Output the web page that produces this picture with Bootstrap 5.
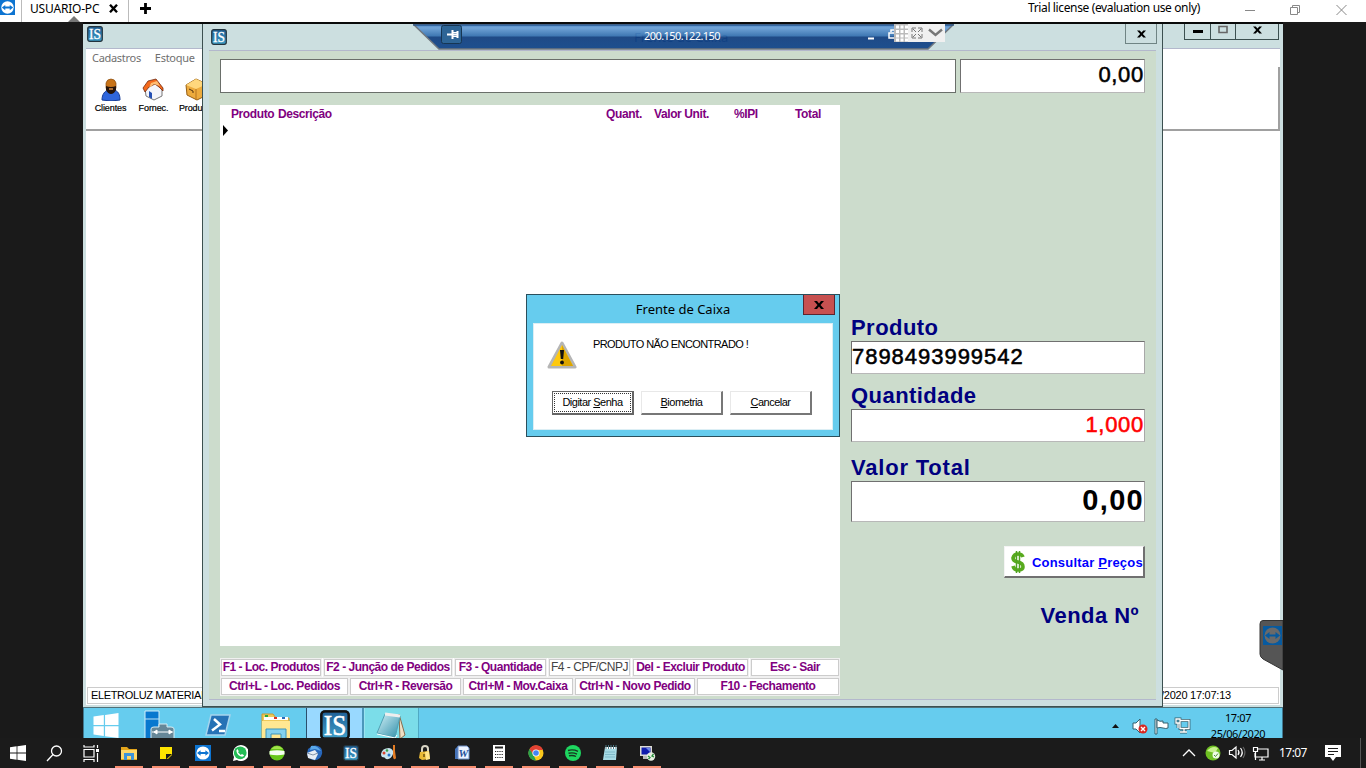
<!DOCTYPE html>
<html lang="pt-BR">
<head>
<meta charset="utf-8">
<title>USUARIO-PC - Frente de Caixa</title>
<meta name="viewport" content="width=device-width, initial-scale=1">
<link href="https://cdn.jsdelivr.net/npm/bootstrap@5.3.0/dist/css/bootstrap.min.css" rel="stylesheet">
<style>
:root{--frame:#ccdfe0;--mint:#ccdccc;--sky:#66ccee;--edge:#3c5050;--plum:#800080;--navy:#000080}
body{width:1366px;height:768px;overflow:hidden;background:#1a1a1a;color:#000;font-family:"Liberation Sans",Arial,sans-serif;font-size:12px;line-height:1.2}
svg{display:block;flex:none}
.hostbar{height:22px;font-family:"Noto Sans",sans-serif;font-size:12px}
.host-logo{width:22px;border-right:1px solid #bbb}
.host-tab{width:107px;border-right:1px solid #bbb;padding-left:8px;gap:10px;letter-spacing:-.2px;line-height:18px}
.host-tab::after{content:"";position:absolute;left:46px;bottom:0;border:6px solid transparent;border-top:0;border-bottom-color:#777}
.trial{margin-left:auto;letter-spacing:-.37px;line-height:15px;width:215px;white-space:nowrap}
.stage{height:716px}
.remote{width:1200px;height:716px;margin-left:83px;overflow:hidden;border-top:2px solid #0a0a0a}
.back-win{height:683px;background:var(--frame)}
.back-title{height:24px}
.back-body{margin:0 3px;height:657px;border-top:1px solid #b3b8cc}
.menu-row{height:18px;font-family:"Noto Sans",sans-serif;font-size:11px;color:#707070;padding:2px 0 0 6px;gap:14px;letter-spacing:-.3px}
.tool-row{height:64px;border-bottom:2px solid #a0a0a0;border-right:2px solid #a0a0a0;font-size:9px;padding-left:3px;-webkit-text-stroke:.2px #000;letter-spacing:-.1px}
.tool{width:43px;padding-top:11px;height:60px}
.tool svg{margin-bottom:2px}
.back-status{height:17px;border:1px solid #ccc;margin:0 1px 1px;padding:1px 3px 0;font-size:11px;letter-spacing:-.35px;white-space:nowrap}
.back-status .stamp{width:114px;letter-spacing:-.25px}
.cap-btn{height:16px;border:1px solid var(--edge);border-top:0}
.pos-win{left:119px;top:0;width:961px;height:683px;background:var(--frame);border:1px solid var(--edge);border-top:0;padding:0 6px 6px}
.pos-title{height:27px;padding-left:2px;margin-right:-1px}
.pos-close{width:32px;height:20px;border:1px solid #6f8484;border-top:0}
.pos-body{height:650px;background:var(--mint);border-top:1px solid #b3b8cc;border-bottom:1px solid #b3b8cc;padding:8px 11px 4px}
.sunk{background:#fff;border:1px solid;border-color:#707070 #a8a8a8 #b8b8b8 #707070;overflow:hidden;white-space:nowrap}
.search-line{width:736px;height:34px;border-color:#6a6f6a}
.num{font-size:22px;-webkit-text-stroke:.55px;letter-spacing:.7px;line-height:30px}
.num-code{letter-spacing:.97px}
.num-big{height:41px;font-size:29px;line-height:36px;letter-spacing:1.3px}
.items{width:620px;height:541px;margin-top:12px}
.plum{color:var(--plum);font-weight:700;font-size:12px;letter-spacing:-.4px}
.grid-head{height:18px;padding:2px 0 0 11px;display:grid;grid-template-columns:47px 328px 48px 80px 61px 1fr}
.key2{letter-spacing:-.35px}
.keys{width:620px;height:38px;margin-top:12px;display:flex;flex-direction:column;gap:1px}
.key{border:1px solid #ccc;box-shadow:0 0 0 1px #f0f0f0;height:17px;margin-top:1px;line-height:15px;text-align:center;white-space:nowrap;letter-spacing:-.48px}
.krow{display:grid;padding:0 1px}
.kr1{grid-template-columns:100px 128px 91px 81px 115px 1fr;gap:3px}
.kr2{grid-template-columns:127px 111px 110px 120px 1fr;gap:2px}
.kr2 .key{letter-spacing:-.44px}
.side{width:294px}
.lbl{color:var(--navy);font-weight:700;font-size:22px;letter-spacing:.45px;line-height:26px}
.price-btn{width:141px;height:32px;background:#fff;border:1px solid;border-color:#f4f4f4 #707070 #707070 #f4f4f4;border-right-width:2px;border-bottom-width:2px;color:#00f;font-weight:700;font-size:13px;white-space:nowrap;letter-spacing:.2px}
.price-btn span{padding-top:2px}
.conn{left:330px;top:0;width:541px;height:27px}
.conn-ip{left:479px;top:5px;color:#fff;font-family:"Noto Sans",sans-serif;font-size:11px;line-height:14px;width:240px;text-align:center;letter-spacing:-.55px}
.conn-ghost{left:551px;top:4px;color:#0d3a78;font-family:"Noto Sans",sans-serif;font-size:13px;line-height:19px;white-space:nowrap}
.tv-tools{left:811px;top:-1px;width:51px;height:19px;background:#f0f0f0}
.dlg{left:443px;top:270px;width:314px;height:143px;background:var(--sky);border:1px solid #2b4f5c;padding:0 6px 6px}
.dlg-title{height:28px;font-family:"Noto Sans",sans-serif;font-size:13px;line-height:28px}
.dlg-x{width:32px;height:20px;background:#c75050;right:4px;top:0;border:1px solid #5b2530;border-top:0}
.dlg-body{height:107px;border:1px solid #dceef4}
.dlg-msg{font-size:11px;letter-spacing:-.58px;line-height:14px;margin:13px 0 0 16px}
.dbtn{width:82px;height:24px;line-height:21px;font-size:11px;letter-spacing:-.5px;text-align:center;background:#fff;border:1px solid;border-color:#e8e8e8 #777 #777 #e8e8e8;border-width:1px 2px 2px 1px;white-space:nowrap}
.dbtn-on{border-color:#666;padding:1px}
.dbtn-on span{display:block;outline:1px dotted #333;outline-offset:-1px;height:19px;line-height:19px}
.rtask{height:31px;background:var(--sky);border-top:1px solid #507078;border-left:1px solid #407890;border-right:1px solid #407890;overflow:hidden;font-family:"Noto Sans",sans-serif;font-size:11px}
.rt{width:58px;height:31px;padding-top:2px;display:flex;justify-content:center}
.rt-on{background:#99d9ff;border-left:1px solid #2a4f6d;border-right:2px solid #4c97bb}
.rt-note{background:#7bdde9;border-right:1px solid #4fa9c4;border-left:1px solid #99e4f0}
.clock{width:84px;line-height:15.5px;letter-spacing:-.4px;margin-right:2px}
.tv-flap{left:1176px;top:596px}
.htask{height:30px;background:#1b1b1b;color:#fff}
.hi{width:37px;height:30px;display:flex;flex-direction:column;align-items:center;padding-top:7px}
.run::after{content:"";width:28px;height:2px;background:#f88f70;margin-top:5px;flex:none}
.host-time{width:44px;font-family:"Noto Sans",sans-serif;font-size:12px;letter-spacing:-.55px}
</style>
</head>
<body>
<svg width="0" height="0" class="position-absolute" aria-hidden="true">
  <defs>
    <linearGradient id="blu" x1="0" y1="0" x2="0" y2="1"><stop offset="0" stop-color="#1f5f96"/><stop offset="1" stop-color="#3f9fc9"/></linearGradient>
    <linearGradient id="bar" x1="0" y1="0" x2="0" y2="1"><stop offset="0" stop-color="#3a74b8"/><stop offset=".15" stop-color="#6a9fd6"/><stop offset=".48" stop-color="#3470b0"/><stop offset=".52" stop-color="#123f80"/><stop offset="1" stop-color="#104488"/></linearGradient>
    <linearGradient id="gold" x1="0" y1="0" x2="0" y2="1"><stop offset="0" stop-color="#fff2a0"/><stop offset="1" stop-color="#f2b400"/></linearGradient>
    <linearGradient id="paper" x1="0" y1="0" x2="1" y2="1"><stop offset="0" stop-color="#d4f2f8"/><stop offset="1" stop-color="#2d8da8"/></linearGradient>
    <symbol id="is" viewBox="0 0 16 16"><rect x=".7" y=".7" width="14.6" height="14.6" rx="2" fill="url(#blu)" stroke="#23343e" stroke-width="1.2"/><text x="8" y="13.2" text-anchor="middle" font-family="Liberation Serif,serif" font-size="15.5" textLength="12" lengthAdjust="spacingAndGlyphs" fill="#fff" stroke="#fff" stroke-width=".3">IS</text></symbol>
    <symbol id="tv" viewBox="0 0 16 16"><rect width="16" height="16" fill="#0d74d1"/><circle cx="8" cy="8" r="6.6" fill="#fff"/><path d="M2 8l3.6-2.8V7h4.8V5.2L14 8l-3.6 2.8V9H5.6v1.8z" fill="#0d74d1"/></symbol>
    <symbol id="win" viewBox="0 0 16 16"><path d="M0 2.2L6.6 1.3V7.6H0zM7.4 1.2L16 0V7.6H7.4zM0 8.4H6.6V14.7L0 13.8zM7.4 8.4H16V16L7.4 14.8z" fill="#fff"/></symbol>
    <symbol id="x" viewBox="0 0 10 8"><path d="M0 0h3l2 2.4L7 0h3L6.5 4 10 8H7L5 5.6 3 8H0l3.5-4z" fill="#000"/></symbol>
  </defs>
</svg>
<div class="d-flex flex-column vh-100">

  <header class="hostbar d-flex bg-white">
    <div class="host-logo"><svg width="15" height="15"><use href="#tv"/></svg></div>
    <div class="host-tab position-relative d-flex">USUARIO-PC
      <svg class="mt-1" width="9" height="9" viewBox="0 0 9 9"><path d="M1 .8l7 7.4M8 .8L1 8.2" stroke="#000" stroke-width="2.4"/></svg></div>
    <svg class="ms-2" width="20" height="18" viewBox="0 0 20 18"><path d="M8.5 3v11M3 8.500h11" stroke="#000" stroke-width="2.8"/></svg>
    <div class="trial">Trial license (evaluation use only)</div>
    <svg width="123" height="22" viewBox="0 0 123 22" fill="none" stroke="#888"><path d="M2 10.500h10M93.500 5l10 10M103.500 5l-10 10"/><path d="M47.500 7.500h7v7h-7zM49.500 7V5.500h7v7H55"/></svg>
  </header>

  <main class="stage">
    <div class="remote position-relative">

      <section class="back-win">
        <div class="back-title d-flex justify-content-between ps-1">
          <svg width="16" height="18" viewBox="0 0 16 18"><use href="#is" y="2" width="16" height="16"/></svg>
          <div class="d-flex me-1">
            <div class="cap-btn d-flex justify-content-center" style="width:27px"><svg width="12" height="12"><path d="M1 7.500h10" stroke="#000" stroke-width="3"/></svg></div>
            <div class="cap-btn border-start-0 d-flex justify-content-center" style="width:25px"><svg width="12" height="12"><path d="M2 2.500h8v6H2z" fill="none" stroke="#666" stroke-width="1.6"/></svg></div>
            <div class="cap-btn border-start-0 d-flex justify-content-center" style="width:43px"><svg width="9" height="10"><use href="#x" y="2" width="9" height="8"/></svg></div>
          </div>
        </div>
        <div class="back-body bg-white d-flex flex-column">
          <nav class="menu-row d-flex"><span>Cadastros</span><span>Estoque</span></nav>
          <div class="tool-row d-flex">
            <div class="tool d-flex flex-column align-items-center"><svg width="22" height="23" viewBox="0 0 22 23"><path d="M2 22c0-6 3-9 6-10h6c4 1 6 4 6 10q-9 2-18 0z" fill="#2f66dc" stroke="#173d98"/><path d="M6 8V5q1-4 5-4t5 4v5q-2 5-5 5t-5-5z" fill="#c97418" stroke="#8a4d12" stroke-width=".7"/><path d="M6 8q5 2 10 0v4q-2 4-5 4t-5-4z" fill="#26150b"/><path d="M9 11h4" stroke="#d68b46" stroke-width="1.5"/></svg>Clientes</div>
            <div class="tool d-flex flex-column align-items-center"><svg width="23" height="23" viewBox="0 0 23 23"><path d="M3 10l9-6 8 7v7l-8 4-8-4z" fill="#f5f5fa" stroke="#777"/><path d="M1 10l5-7 8-2 7 9v3l-4-4-4-3-6 3-4 5z" fill="#f46a1c" stroke="#702a12" stroke-width=".8"/><path d="M9 5l6-2 3 5-6-2-5 4z" fill="#ffbd72"/><path d="M7 13l3 2v6l-3-2z" fill="#254fb4"/></svg>Fornec.</div>
            <div class="tool d-flex flex-column align-items-center"><svg width="23" height="23" viewBox="0 0 23 23"><path d="M1 7l10-6 11 5v11l-10 5L2 17z" fill="#edab3d" stroke="#986015"/><path d="M1 7l10 4 11-5L11 1z" fill="#ffd77d"/><path d="M11 11v11" stroke="#b67421"/><path d="M4 11l4 2v2" stroke="#553410" fill="none"/></svg>Produtos</div>
          </div>
          <div class="back-status d-flex justify-content-between mt-auto"><span>ELETROLUZ MATERIAIS</span><span class="stamp">/2020 17:07:13</span></div>
        </div>
      </section>

      <section class="pos-win position-absolute d-flex flex-column">
        <div class="pos-title d-flex justify-content-between">
          <svg width="16" height="22" viewBox="0 0 16 22"><use href="#is" y="5" width="16" height="16"/></svg>
          <div class="pos-close d-flex align-items-center justify-content-center"><svg width="9" height="8"><use href="#x" width="9" height="8"/></svg></div>
        </div>
        <div class="pos-body">
          <div class="d-flex justify-content-between"><div class="sunk search-line"></div><div class="sunk num text-end" style="width:185px">0,00</div></div>
          <div class="d-flex justify-content-between">
            <div>
              <div class="items bg-white">
                <div class="grid-head plum"><span>Produto</span><span>Descrição</span><span class="key2">Quant.</span><span>Valor Unit.</span><span>%IPI</span><span class="key2">Total</span></div>
                <svg width="10" height="14"><path d="M3 2l5 5.500L3 13z" fill="#000"/></svg>
              </div>
              <div class="keys bg-white plum">
                <div class="krow kr1"><div class="key">F1 - Loc. Produtos</div><div class="key">F2 - Junção de Pedidos</div><div class="key">F3 - Quantidade</div><div class="key fw-normal" style="color:#444">F4 - CPF/CNPJ</div><div class="key">Del - Excluir Produto</div><div class="key">Esc - Sair</div></div>
                <div class="krow kr2"><div class="key">Ctrl+L - Loc. Pedidos</div><div class="key">Ctrl+R - Reversão</div><div class="key">Ctrl+M - Mov.Caixa</div><div class="key">Ctrl+N - Novo Pedido</div><div class="key">F10 - Fechamento</div></div>
              </div>
            </div>
            <div class="side d-flex flex-column" style="padding-top:222px">
              <div class="lbl">Produto</div>
              <div class="sunk num num-code" style="height:33px">7898493999542</div>
              <div class="lbl" style="margin-top:9px">Quantidade</div>
              <div class="sunk num text-end" style="height:33px;color:red">1,000</div>
              <div class="lbl" style="margin-top:13px;letter-spacing:.8px">Valor Total</div>
              <div class="sunk num-big text-end fw-bold">0,00</div>
              <div class="price-btn d-flex align-items-center align-self-end" style="margin-top:24px"><svg width="27" height="26" viewBox="0 0 27 26"><path d="M18 8Q17 5 13 5T8 9q0 3 5 4t5 5q0 3-5 3-4 0-5-4" fill="none" stroke="#58aa1e" stroke-width="3.600"/><path d="M11.500 2v22M14.500 2v22" stroke="#4fa320" stroke-width="1.5"/></svg><span>Consultar <u>P</u>reços</span></div>
              <div class="lbl align-self-end" style="margin:25px 6px 0 0">Venda Nº</div>
            </div>
          </div>
        </div>
      </section>

      <div class="conn-ghost position-absolute">Frente de Caixa</div>
      <svg class="conn position-absolute" viewBox="0 0 541 27"><path d="M0 0H541L515 25H26z" fill="url(#bar)" fill-opacity=".93" stroke="#70777e" stroke-width="1.500"/><path d="M0 1H541" stroke="#15447f"/><rect x="28.500" y="1.500" width="20" height="18" rx="2" fill="#2e6596" stroke="#173653"/><path d="M34 10.500h5M39.500 6v9M40 10.500h5M44.500 7v7" stroke="#fff" stroke-width="2"/><path d="M40 8.500h4M40 12.500h4" stroke="#fff"/><path d="M455 14.500h6" stroke="#fff" stroke-width="2"/><path d="M476 9h6v5h-6zM478 8V6h5" fill="none" stroke="#fff" stroke-width="1.500"/></svg>
      <div class="conn-ip position-absolute">200.150.122.150</div>
      <svg class="tv-tools position-absolute" viewBox="0 0 51 19"><path d="M0 0h14v19H0z" fill="#bbb"/><path d="M2 4h12M2 8.500h12M2 13h12M2 17h12" stroke="#fff" stroke-width="3" stroke-dasharray="3 1.500"/><path d="M18 9V5h4M24 5h4v4M28 11v4h-4M22 15h-4v-4M19 6l3 3M27 6l-3 3M27 14l-3-3M19 14l3-3" fill="none" stroke="#777"/><path d="M35 6.500l6.500 5.500L48 6.500" fill="none" stroke="#777" stroke-width="2.400"/></svg>

      <section class="dlg position-absolute">
        <div class="dlg-title text-center">Frente de Caixa</div>
        <div class="dlg-x position-absolute d-flex align-items-center justify-content-center"><svg width="10" height="8"><use href="#x" width="10" height="8"/></svg></div>
        <div class="dlg-body bg-white">
          <div class="d-flex" style="height:67px"><svg width="30" height="28" viewBox="0 0 30 28" style="margin:17px 0 0 13px"><path d="M15 2L28 26H2z" fill="url(#gold)" stroke="#b5b5b5" stroke-width="3" stroke-linejoin="round"/><path d="M15 4L26 25H4z" fill="#ffc90e"/><path d="M15 4L26 25H15z" fill="#dca500"/><path d="M13 9h4l-.8 9h-2.400z" fill="#111"/><circle cx="15" cy="21.500" r="1.900" fill="#111"/></svg><div class="dlg-msg">PRODUTO NÃO ENCONTRADO !</div></div>
          <div class="d-flex" style="gap:7px;padding-left:18px"><div class="dbtn dbtn-on"><span>Digitar <u>S</u>enha</span></div><div class="dbtn"><u>B</u>iometria</div><div class="dbtn"><u>C</u>ancelar</div></div>
        </div>
      </section>

      <section class="rtask d-flex">
        <div class="rt" style="width:44px;padding-top:5px"><svg width="26" height="25"><use href="#win"/></svg></div>
        <div class="rt" style="width:62px"><svg width="31" height="32" viewBox="0 0 31 32"><path d="M1 1h14v31H1z" fill="#0878cf" stroke="#d3eefa"/><path d="M1 9h14" stroke="#bce2f6"/><path d="M7 19q0-2 3-2h5v-3h8v3h4q3 0 3 2v13H7z" fill="#668798" stroke="#d7edf3"/><path d="M8 22h21M10 22l3-2v4zM28 22l-3-2v4z" stroke="#fff" fill="#fff"/></svg></div>
        <div class="rt" style="width:55px;padding-top:5px"><svg width="28" height="24" viewBox="0 0 28 24"><path d="M7 2h19l-5 20H2z" fill="#2672b6" stroke="#a6d4ed" stroke-width="1.500"/><path d="M10 6l6 5.500-8 6M15 18h6" fill="none" stroke="#fff" stroke-width="2.500"/></svg></div>
        <div class="rt" style="width:61px;padding-top:4px"><svg width="32" height="27" viewBox="0 0 32 27"><path d="M2 2h11l3 4h13v21H2z" fill="#efc95b" stroke="#c99d31"/><path d="M4 5h24v3H4z" fill="#fff"/><path d="M5 4h3" stroke="#28a83b" stroke-width="2"/><path d="M14 6h3" stroke="#dc3020" stroke-width="2"/><path d="M22 6h3" stroke="#2a6cba" stroke-width="2"/><path d="M2 9h28v18H2z" fill="#ffe792"/><path d="M6 17h20v10h-5v-5H11v5H6z" fill="#83d0ee" stroke="#3b93bb"/></svg></div>
        <div class="rt rt-on"><svg width="30" height="30" viewBox="0 0 16 16"><use href="#is"/><rect x=".7" y=".7" width="14.600" height="14.600" rx="2" fill="none" stroke="#111" stroke-width="1.200"/></svg></div>
        <div class="rt rt-note" style="width:55px;padding-top:4px"><svg width="31" height="28" viewBox="0 0 31 28"><path d="M23 2l6 21-5 4z" fill="#eee0c5" stroke="#876d4d"/><path d="M9 2l15 2-5 22L1 21z" fill="url(#paper)" stroke="#50a1b4"/><path d="M9 2l15 2" stroke="#eee" stroke-width="3"/><path d="M1 22l18 4 2-3" fill="none" stroke="#fff"/></svg></div>
        <div class="ms-auto d-flex">
          <svg width="91" height="30" viewBox="0 0 91 30"><path d="M7 20h7l-3.500-4z" fill="#111"/><g stroke="#35606e" fill="#fff"><path d="M28 15h3l4-4v14l-4-4h-3z"/><path d="M50 11h2v15h-2z"/><path d="M52 12q3 2 6 1v2h5v5q-2 1-5 0-3-1-6 0z"/></g><circle cx="38" cy="21" r="4.500" fill="#d92721"/><path d="M36 19l4 4M40 19l-4 4" stroke="#fff" stroke-width="1.400"/><path id="rnet" d="M75 12.500h9v8h-9zM75 24h7M79 21v3M71 11h4v4h-4zM73 15v5" fill="none" stroke="#35606e" stroke-width="2.800"/><path d="M75 12.500h9v8h-9zM75 24h7M79 21v3M71 11h4v4h-4zM73 15v5" fill="none" stroke="#fff" stroke-width="1.300"/></svg>
          <div class="clock text-center"><div style="margin-top:2px">17:07</div><div>25/06/2020</div></div>
        </div>
      </section>

      <svg class="tv-flap position-absolute" width="24" height="52" viewBox="0 0 24 52"><path d="M4 .5H24V50L4 39q-3-2-3-5V4Q1 .5 4 .5z" fill="#555" stroke="#333"/><path d="M4 6h19v19H4z" fill="#075a9f"/><circle cx="13.500" cy="15.500" r="8" fill="#6a6a6a"/><path d="M6 15.500l4.500-3.500v2.500h6V12l4.500 3.500-4.500 3.500v-2.500h-6V19z" fill="#075a9f"/></svg>
    </div>
  </main>

  <footer class="htask d-flex">
    <div class="hi" style="width:36px"><svg width="16" height="16"><use href="#win"/></svg></div>
    <div class="hi"><svg width="17" height="17" viewBox="0 0 17 17" fill="none" stroke="#fff" stroke-width="1.300"><circle cx="10.500" cy="6" r="5"/><path d="M7 9.500L1 16"/></svg></div>
    <div class="hi" style="width:37.5px"><svg width="17" height="17" viewBox="0 0 17 17" fill="none" stroke="#fff" stroke-width="1.200"><path d="M1 4.500h10v7.500H1zM1 0v2h10V0M1 17v-2.500h10V17M14.500 0v3M14.500 8v9"/><path d="M13 5.500h3" stroke-width="3"/></svg></div>
    <div class="hi run"><svg width="16" height="16" viewBox="0 0 16 16"><path d="M0 2h6l2 2h8v11H0z" fill="#e3a51b"/><path d="M0 5h16v9H0z" fill="#ffd86b"/><path d="M3 8h10v7h-3v-4H6v4H3z" fill="#3d94da"/></svg></div>
    <div class="hi run"><svg width="14" height="16" viewBox="0 0 14 16"><path d="M1 2h12v12H1z" fill="#ffe500"/><path d="M7 14V9h6v5z" fill="#1b1b1b"/><path d="M7.500 14l5.500-5v1l-4 4z" fill="#e8cb00"/></svg></div>
    <div class="hi run"><svg width="16" height="16"><use href="#tv"/></svg></div>
    <div class="hi run"><svg width="16" height="16" viewBox="0 0 16 16"><path d="M1 16l1-4A8 8 0 1 1 5 15z" fill="#fff"/><circle cx="8.200" cy="7.800" r="6.400" fill="#23bd55"/><path d="M5.500 4l1.300 2.300-.8 1 2.700 2.600 1.300-.9 2 1.200c-.4 1.600-2 1.800-3.700 1C6 10 4.200 7.500 4.400 5.200z" fill="#fff"/></svg></div>
    <div class="hi run"><svg width="16" height="16" viewBox="0 0 16 16"><circle cx="8" cy="8" r="7.500" fill="#67c719"/><path d="M2 4q6-6 12 0z" fill="#a4e34d"/><path d="M.5 6q7.500-1.500 15 0v3.500q-7.500 1.500-15 0z" fill="#f5fff0"/></svg></div>
    <div class="hi run"><svg width="17" height="16" viewBox="0 0 17 16"><path d="M2 4q5-5 10-3 5 2 4 8-2 7-9 6-5-1-6-6z" fill="#2766ba"/><path d="M1 8l8-3 3 4-3 6-7-2z" fill="#e8edf4"/><path d="M1 8l6 2 5-2" fill="none" stroke="#8193aa"/><path d="M5 1q6-1 10 5l-6-2-5 1z" fill="#5aa9ea"/></svg></div>
    <div class="hi run"><svg width="16" height="16"><use href="#is"/></svg></div>
    <div class="hi run"><svg width="17" height="16" viewBox="0 0 17 16"><path d="M1 9q1-6 8-6 5 1 4 6-2 6-7 5-1-2-4-2-1-1-1-3z" fill="#c8e4ef"/><circle cx="4" cy="8" r="1.500" fill="#d9452f"/><circle cx="7" cy="5.500" r="1.300" fill="#36a24a"/><circle cx="9" cy="10" r="1.500" fill="#2673cc"/><path d="M13 0h2v6l1 7q-2 3-3-1z" fill="#e47d24"/></svg></div>
    <div class="hi run"><svg width="16" height="16" viewBox="0 0 16 16"><path d="M5 8V4q0-3 3-3t3 3v4" fill="none" stroke="#d9d5c5" stroke-width="2"/><path d="M3 7l9-1 1 8-8 1-3-2z" fill="#e8b936"/><path d="M8 7l4-1 1 8-4 1z" fill="#ffe58a"/><path d="M7 9v3" stroke="#6c5211" stroke-width="1.500"/></svg></div>
    <div class="hi run"><svg width="16" height="16" viewBox="0 0 16 16"><path d="M1 4l3-3v13H1z" fill="#4472b8"/><path d="M4 1h9l2 2v11H4z" fill="#edf3ff" stroke="#6b8dc5"/><text x="9.500" y="12" text-anchor="middle" font-family="Liberation Serif,serif" font-weight="700" font-style="italic" font-size="11" fill="#234f99">W</text></svg></div>
    <div class="hi run"><svg width="14" height="16" viewBox="0 0 14 16"><path d="M1 0h12v16H1z" fill="#fff"/><path d="M3 2.500h8" stroke="#222" stroke-width="2"/><path d="M3 6.500h8M3 9.500h8M3 12.500h8" stroke="#222" stroke-width="1.200" stroke-dasharray="1.200 1"/></svg></div>
    <div class="hi run"><svg width="16" height="16" viewBox="0 0 16 16"><circle cx="8" cy="8" r="7.500" fill="#fbc81c"/><path d="M1.500 4A7.500 7.500 0 0 1 15 5H8L5 10z" fill="#e34133"/><path d="M1.500 4l4 6L8 15.500A7.500 7.500 0 0 1 1.500 4z" fill="#2ba24c"/><circle cx="8" cy="8" r="3.600" fill="#fff"/><circle cx="8" cy="8" r="2.800" fill="#4285f4"/></svg></div>
    <div class="hi run"><svg width="16" height="16" viewBox="0 0 16 16"><circle cx="8" cy="8" r="8" fill="#1ed760"/><path d="M3 5.500q5-1.500 10 .8M3.500 8.300q4.500-1.200 8.500.8M4 10.800q4-1 7 .7" fill="none" stroke="#173820" stroke-width="1.400"/></svg></div>
    <div class="hi run"><svg width="16" height="16" viewBox="0 0 16 16"><path d="M3 2h12l-1 13H1z" fill="#a7dbe5"/><path d="M3 2h12v2H3z" fill="#fff"/><path d="M4 0v4M6.500 0v4M9 0v4M11.500 0v4M14 0v4" stroke="#4b7885"/><path d="M3 7h10M3 9.500h10M3 12h10" stroke="#6eacbb" stroke-width=".7"/></svg></div>
    <div class="hi run"><svg width="17" height="16" viewBox="0 0 17 16"><path d="M1 1h12v10H1z" fill="#dcdcd4"/><path d="M2.500 2.500h9v7h-9z" fill="#101dad"/><path d="M7 3h4v4z" fill="#6b87e8"/><path d="M4 11h5v3H4z" fill="#bbb"/><circle cx="12" cy="11.500" r="4.200" fill="#e8eee3"/><path d="M9 11l2 1.500L9.500 14M14.500 9L13 11l2 1" fill="none" stroke="#249037" stroke-width="1.300"/></svg></div>
    <div class="ms-auto d-flex align-items-center">
      <svg width="98" height="30" viewBox="0 0 98 30"><path d="M2 18l6-6 6 6" fill="none" stroke="#fff" stroke-width="1.300"/><circle cx="32" cy="15" r="7.500" fill="#6ec022"/><path d="M26 13q5-6 11-3l-3 5z" fill="#c7f18d"/><circle cx="35" cy="17" r="3.500" fill="#eefbe5"/><path d="M33 17l1.500 1.500L37 15.500" fill="none" stroke="#4b8f35"/><g fill="none" stroke="#fff" stroke-width="1.200"><path d="M48.500 12.500h2.500l4-3.500v11l-4-3.500h-2.500zM57 12q2 2.500 0 5M59.500 10q3.500 4.500 0 9M76 11h11v8H74v-4M78 22h6M81 19v3M72.500 9.500h4v4h-4zM74.500 14v8"/><path d="M62 9q4 5 0 11" stroke="#666"/></g></svg>
      <div class="host-time">17:07</div>
      <svg width="43" height="30" viewBox="0 0 43 30"><path d="M2 7h16v12h-5l-3 4-3-4H2z" fill="#fff"/><path d="M5 10.500h10M5 13.500h10M5 16.500h6" stroke="#1b1b1b"/><path d="M37.500 0v30" stroke="#555"/></svg>
    </div>
  </footer>
</div>
<script src="https://cdn.jsdelivr.net/npm/bootstrap@5.3.0/dist/js/bootstrap.bundle.min.js"></script>
</body>
</html>
